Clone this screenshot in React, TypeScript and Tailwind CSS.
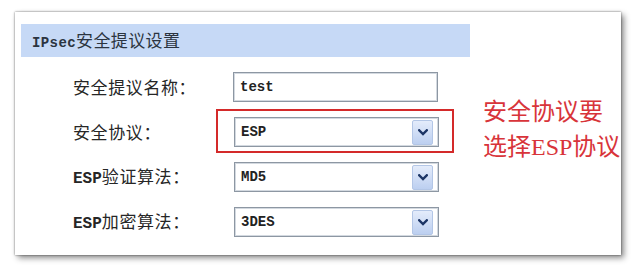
import React from "react";

const cjk = "font-['Noto_Sans_CJK_SC',sans-serif]";
const mono = "font-['Liberation_Mono','Noto_Sans_CJK_SC',monospace]";

function Chevron() {
  return (
    <svg width="10" height="7" viewBox="0 0 10 7">
      <path d="M1.2 1.3 L5 5 L8.8 1.3" fill="none" stroke="#1c3566" strokeWidth="2.4" strokeLinecap="square" />
    </svg>
  );
}

function Field({ value, select }: { value: string; select?: boolean }) {
  return (
    <div className="relative flex h-[30px] w-[205px] items-center border border-[#8d97a3] bg-white shadow-[inset_0_0_0_1px_#d3d9e0] pl-[6px]">
      <span className={`${mono} text-[14px] font-bold text-[#222]`}>{value}</span>
      {select && (
        <div className="absolute right-[5px] top-[2px] flex h-[25px] w-[21px] items-center justify-center rounded-[2px] border border-[#b3c6e6] bg-gradient-to-b from-[#e4ecfb] to-[#bccff0]">
          <Chevron />
        </div>
      )}
    </div>
  );
}

function Label({ children }: { children: React.ReactNode }) {
  return (
    <div className={`${cjk} w-[213px] shrink-0 pl-[52px] text-[17px] tracking-[0.6px] text-[#262626] whitespace-nowrap`}>
      {children}
    </div>
  );
}

const Lat = ({ children }: { children: React.ReactNode }) => (
  <span className={`${mono} text-[16px] font-bold tracking-normal`}>{children}</span>
);

export default function App() {
  return (
    <div className="h-[267px] w-[637px] overflow-hidden bg-white pl-[15px] pt-[12px]">
      <div className="flex h-[243px] w-[606px] bg-white shadow-[0_0_2px_rgba(0,0,0,0.55),3px_3px_6px_rgba(0,0,0,0.45)]">
        <div className="ml-[6px] mt-[12px] flex w-[449px] shrink-0 flex-col">
          <div className="flex h-[33px] items-center bg-[#c6d9f6] pl-[11px]">
            <span className={`${cjk} text-[17px] text-[#2b3440] tracking-[0.4px]`}>
              <span className={`${mono} text-[14px] font-bold`}>IPsec</span>安全提议设置
            </span>
          </div>
          <div className="mt-[15px] flex flex-col gap-[15px]">
            <div className="flex items-center">
              <Label>安全提议名称：</Label>
              <div className="-ml-[1px]"><Field value="test" /></div>
            </div>
            <div className="flex items-center">
              <Label>安全协议：</Label>
              <div className="relative">
                <Field value="ESP" select />
                <div className="pointer-events-none absolute -left-[18px] -top-[8px] h-[44px] w-[238px] border-2 border-[#d42a2a]" />
              </div>
            </div>
            <div className="flex items-center">
              <Label><Lat>ESP</Lat>验证算法：</Label>
              <Field value="MD5" select />
            </div>
            <div className="flex items-center">
              <Label><Lat>ESP</Lat>加密算法：</Label>
              <Field value="3DES" select />
            </div>
          </div>
        </div>
        <div className={`${cjk} ml-[13px] pt-[80px] text-[24px] leading-[35px] text-[#d8343a] whitespace-nowrap`}>
          <div>安全协议要</div>
          <div>选择<span className="font-['Liberation_Serif',serif]">ESP</span>协议</div>
        </div>
      </div>
    </div>
  );
}
